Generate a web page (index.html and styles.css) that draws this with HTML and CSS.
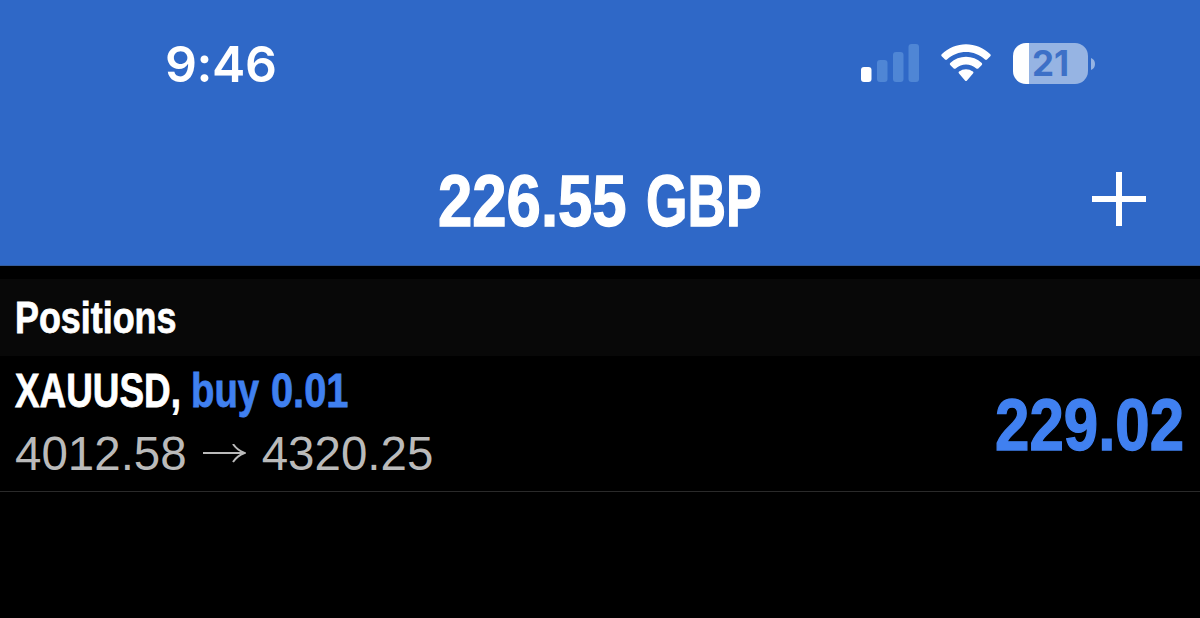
FILE: index.html
```html
<!DOCTYPE html>
<html lang="en">
    <head>
        <meta charset="utf-8">
        <title>Positions</title>
        <link rel="stylesheet" href="styles.css">
    </head>

    <body>
        <header class="header">
            <div class="status">
                <div class="time">9:46</div>
                <div class="indicators">
                    <svg class="signal" width="58" height="38" viewBox="0 0 58 38">
                        <rect x="0" y="23" width="10.500" height="15" rx="3" fill="#fff"/>
                        <rect x="16" y="16" width="10.500" height="22" rx="3" fill="#4f86d5"/>
                        <rect x="32" y="8" width="10.500" height="30" rx="3" fill="#4f86d5"/>
                        <rect x="47.500" y="0" width="10.500" height="38" rx="3" fill="#4f86d5"/>
                    </svg>
                    <svg class="wifi" width="50" height="38" viewBox="0 0 50 38" fill="#fff">
                        <path d="M.7 10.300C14-3.200 36-3.200 49.300 10.300q.9 1 0 2L46 15.600q-1 .9-2 0C33.500 5.600 16.500 5.600 6 15.600q-1 .9-2 0L.7 12.300q-.9-1 0-2Z"/>
                        <path d="M9.200 19C18 10.600 32 10.600 40.800 19q.9 1 0 2l-3.500 3.400q-1 .8-2 0c-6-5.200-14.600-5.200-20.600 0q-1 .8-2 0L9.200 21q-.9-1 0-2Z"/>
                        <path d="M18 27.600c4.200-3.300 9.800-3.300 14 0q1 .9 0 2l-6 6.800q-1 1-2 0l-6-6.800q-1-1.100 0-2Z"/>
                    </svg>
                    <div class="battery">
                        <div class="battery-body"><span class="battery-level">21</span></div>
                        <svg class="battery-cap" width="4" height="12" viewBox="0 0 4 12"><path d="M0 0q4 1.500 4 6t-4 6Z" fill="#96b4e3"/></svg>
                    </div>
                </div>
            </div>
            <div class="toolbar">
                <h1 class="balance">
                    <span class="fit balance-amount"><span>226.55</span></span>
                    <span class="fit balance-currency"><span>GBP</span></span>
                </h1>
                <svg class="add" width="54" height="54" viewBox="0 0 54 54"><path d="M0 27h54M27 0v54" stroke="#fff" stroke-width="6"/></svg>
            </div>
        </header>

        <main>
            <h2 class="section"><span class="fit section-name"><span>Positions</span></span></h2>
            <div class="position">
                <div class="details">
                    <div class="order">
                        <span class="fit symbol"><span>XAUUSD,</span></span>
                        <span class="fit side"><span>buy</span></span>
                        <span class="fit volume"><span>0.01</span></span>
                    </div>
                    <div class="prices">
                        <span>4012.58</span>
                        <svg class="arrow" width="43" height="20" viewBox="0 0 43 20" fill="none" stroke="#bababa" stroke-width="2"><path d="M0 9h41M30 0q4 6 11.500 9q-7.500 3-11.500 9"/></svg>
                        <span>4320.25</span>
                    </div>
                </div>
                <div class="fit profit"><span>229.02</span></div>
            </div>
        </main>
    </body>
</html>
```

FILE: styles.css
```css
body {
    margin: 0;
    height: 618px;
    overflow: hidden;
    background: #000;
    color: #fff;
    font-family: "Liberation Sans", Arial, sans-serif;
}

h1, h2 {
    margin: 0;
}

.header {
    box-sizing: border-box;
    height: 266px;
    background: #2f68c7;
    border-bottom: 1px solid #345c9c;
}

.status {
    display: flex;
    justify-content: space-between;
    height: 132px;
    padding: 0 105px 0 165px;
}

.time {
    padding-top: 32px;
    font: 600 50px/64px Inter, sans-serif;
    letter-spacing: -0.4px;
}

.indicators {
    display: flex;
    height: 41px;
    padding-top: 43px;
}

.signal {
    margin: 1px 22px 0 0;
}

.wifi {
    margin: 1px 22px 0 0;
}

.battery {
    display: flex;
    align-items: center;
    gap: 3px;
}

.battery-body {
    width: 75px;
    height: 41px;
    border-radius: 13px;
    background: linear-gradient(to right, #fff 16px, #96b4e3 16px);
    color: #3d70c7;
    font: 700 35px/41px Inter, sans-serif;
    text-align: center;
}

/* condensed lettering: each word keeps a fixed width and is squeezed into it */
.fit {
    display: block;
    white-space: nowrap;
    font-weight: bold;
    -webkit-text-stroke: 0.8px;
}

.fit span {
    display: inline-block;
    transform-origin: left center;
}

.toolbar {
    display: grid;
    grid-template-columns: 1fr auto 1fr;
    align-items: start;
    padding-top: 29px;
}

.balance {
    display: flex;
    grid-column: 2;
    gap: 20px;
    font-size: 73px;
    line-height: 80px;
    -webkit-text-stroke: 1.4px;
}

.balance .fit,
.profit {
    -webkit-text-stroke: 1.4px;
}

.balance-amount {
    width: 188px;
}

.balance-amount span {
    transform: scaleX(0.845);
}

.balance-currency {
    width: 116px;
}

.balance-currency span {
    transform: scaleX(0.73);
}

.add {
    justify-self: end;
    margin: 11px 54px 0 0;
}

.section {
    height: 77px;
    margin-top: 13px;
    padding-left: 15px;
    background: #080808;
    font-size: 45px;
    line-height: 78px;
}

.section-name span {
    transform: scaleX(0.797);
}

.position {
    display: flex;
    justify-content: space-between;
    box-sizing: border-box;
    height: 136px;
    padding: 0 16px 0 15px;
    border-bottom: 1px solid #2a2a2a;
}

.order {
    display: flex;
    padding-top: 4px;
    font-size: 48.5px;
    line-height: 60px;
}

.symbol {
    width: 176px;
}

.symbol span {
    transform: scaleX(0.76);
}

.side {
    width: 80px;
    color: #4080f0;
}

.side span {
    transform: scaleX(0.79);
}

.volume {
    color: #4080f0;
}

.volume span {
    transform: scaleX(0.82);
}

.prices {
    display: flex;
    align-items: center;
    padding-top: 2px;
    color: #bababa;
    font-size: 47.5px;
    line-height: 64px;
}

.arrow {
    margin: 0 16px;
}

.profit {
    width: 189px;
    color: #4080f0;
    font-size: 73px;
    line-height: 137px;
}

.profit span {
    transform: scaleX(0.847);
}
```
